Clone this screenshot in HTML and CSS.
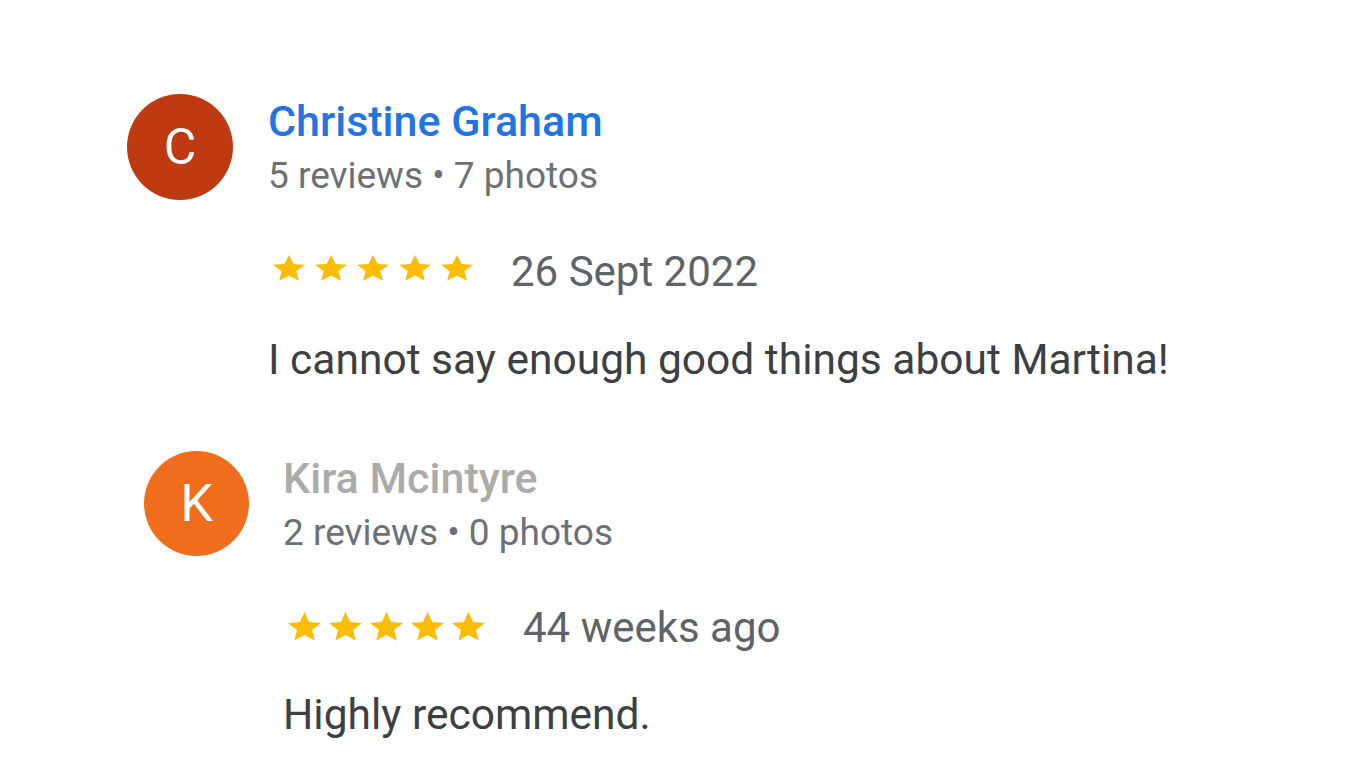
FILE: index.html
```html
<!DOCTYPE html>
<html lang="en">
<head>
<meta charset="utf-8">
<title>Reviews</title>
<link rel="stylesheet" href="styles.css">
</head>
<body>
<main class="reviews">
  <article class="review review-first">
    <header class="review-head">
      <div class="avatar avatar-c">C</div>
      <div class="author">
        <div class="author-name author-link">Christine Graham</div>
        <div class="author-meta">5 reviews • 7 photos</div>
      </div>
    </header>
    <div class="review-body">
      <div class="rating-row">
        <div class="stars">
          <svg class="star" viewBox="2 2 20 19.27" preserveAspectRatio="none"><path d="M12 17.27L18.18 21l-1.64-7.03L22 9.24l-7.19-.61L12 2 9.19 8.63 2 9.24l5.46 4.73L5.82 21z"/></svg>
          <svg class="star" viewBox="2 2 20 19.27" preserveAspectRatio="none"><path d="M12 17.27L18.18 21l-1.64-7.03L22 9.24l-7.19-.61L12 2 9.19 8.63 2 9.24l5.46 4.73L5.82 21z"/></svg>
          <svg class="star" viewBox="2 2 20 19.27" preserveAspectRatio="none"><path d="M12 17.27L18.18 21l-1.64-7.03L22 9.24l-7.19-.61L12 2 9.19 8.63 2 9.24l5.46 4.73L5.82 21z"/></svg>
          <svg class="star" viewBox="2 2 20 19.27" preserveAspectRatio="none"><path d="M12 17.27L18.18 21l-1.64-7.03L22 9.24l-7.19-.61L12 2 9.19 8.63 2 9.24l5.46 4.73L5.82 21z"/></svg>
          <svg class="star" viewBox="2 2 20 19.27" preserveAspectRatio="none"><path d="M12 17.27L18.18 21l-1.64-7.03L22 9.24l-7.19-.61L12 2 9.19 8.63 2 9.24l5.46 4.73L5.82 21z"/></svg>
        </div>
        <span class="date">26 Sept 2022</span>
      </div>
      <p class="text">I cannot say enough good things about Martina!</p>
    </div>
  </article>

  <article class="review review-second">
    <header class="review-head">
      <div class="avatar avatar-k">K</div>
      <div class="author">
        <div class="author-name author-muted">Kira Mcintyre</div>
        <div class="author-meta">2 reviews • 0 photos</div>
      </div>
    </header>
    <div class="review-body">
      <div class="rating-row">
        <div class="stars">
          <svg class="star" viewBox="2 2 20 19.27" preserveAspectRatio="none"><path d="M12 17.27L18.18 21l-1.64-7.03L22 9.24l-7.19-.61L12 2 9.19 8.63 2 9.24l5.46 4.73L5.82 21z"/></svg>
          <svg class="star" viewBox="2 2 20 19.27" preserveAspectRatio="none"><path d="M12 17.27L18.18 21l-1.64-7.03L22 9.24l-7.19-.61L12 2 9.19 8.63 2 9.24l5.46 4.73L5.82 21z"/></svg>
          <svg class="star" viewBox="2 2 20 19.27" preserveAspectRatio="none"><path d="M12 17.27L18.18 21l-1.64-7.03L22 9.24l-7.19-.61L12 2 9.19 8.63 2 9.24l5.46 4.73L5.82 21z"/></svg>
          <svg class="star" viewBox="2 2 20 19.27" preserveAspectRatio="none"><path d="M12 17.27L18.18 21l-1.64-7.03L22 9.24l-7.19-.61L12 2 9.19 8.63 2 9.24l5.46 4.73L5.82 21z"/></svg>
          <svg class="star" viewBox="2 2 20 19.27" preserveAspectRatio="none"><path d="M12 17.27L18.18 21l-1.64-7.03L22 9.24l-7.19-.61L12 2 9.19 8.63 2 9.24l5.46 4.73L5.82 21z"/></svg>
        </div>
        <span class="date">44 weeks ago</span>
      </div>
      <p class="text">Highly recommend.</p>
    </div>
  </article>
</main>
</body>
</html>
```
FILE: styles.css
```css
* { box-sizing: border-box; }

html, body {
  margin: 0;
  padding: 0;
  background: #ffffff;
}

body {
  font-family: Roboto, "Liberation Sans", Arial, sans-serif;
  width: 1366px;
  height: 768px;
  overflow: hidden;
}

.reviews {
  display: flex;
  flex-direction: column;
  padding-top: 94px;
}

.review {
  display: flex;
  flex-direction: column;
}

.review-first {
  padding-left: 127px;
}

.review-second {
  padding-left: 144px;
  margin-top: 65px;
}

.review-head {
  display: flex;
  align-items: flex-start;
  gap: 35px;
}

.review-second .review-head {
  gap: 34px;
}

.avatar {
  flex: none;
  width: 106px;
  height: 106px;
  border-radius: 50%;
  color: #ffffff;
  display: flex;
  align-items: center;
  justify-content: center;
  font-weight: 400;
}

.avatar-c {
  background: #bf3a10;
  font-size: 50px;
}

.avatar-k {
  background: #ef6d1c;
  width: 105px;
  height: 105px;
  font-size: 52px;
}

.author {
  display: flex;
  flex-direction: column;
  padding-top: 1px;
}

.author-name {
  font-size: 43px;
  font-weight: 500;
  line-height: 52px;
}

.author-link { color: #2174e4; }
.author-muted { color: #ababab; }

.author-meta {
  margin-top: 5px;
  font-size: 37px;
  line-height: 48px;
  color: #6d7176;
}

.review-body {
  padding-left: 141px;
  display: flex;
  flex-direction: column;
}

.review-second .review-body {
  padding-left: 139px;
}

.rating-row {
  display: flex;
  align-items: center;
  height: 48px;
  margin-top: 48px;
}

.review-second .rating-row { margin-top: 47px; }

.stars {
  display: flex;
  gap: 10px;
  padding-left: 5px;
  margin-bottom: 8px;
}

.star {
  width: 32px;
  height: 26px;
  fill: #fbbc05;
  display: block;
}

.review-second .stars {
  gap: 8px;
  margin-bottom: 4px;
}

.review-second .star {
  width: 33px;
  height: 29px;
}

.date {
  margin-left: 38px;
  font-size: 42px;
  line-height: 48px;
  color: #5f6368;
}

.text {
  margin: 38px 0 0;
  font-size: 42.5px;
  line-height: 52px;
  color: #3c4043;
}

.review-second .text { margin-top: 37px; }
```
